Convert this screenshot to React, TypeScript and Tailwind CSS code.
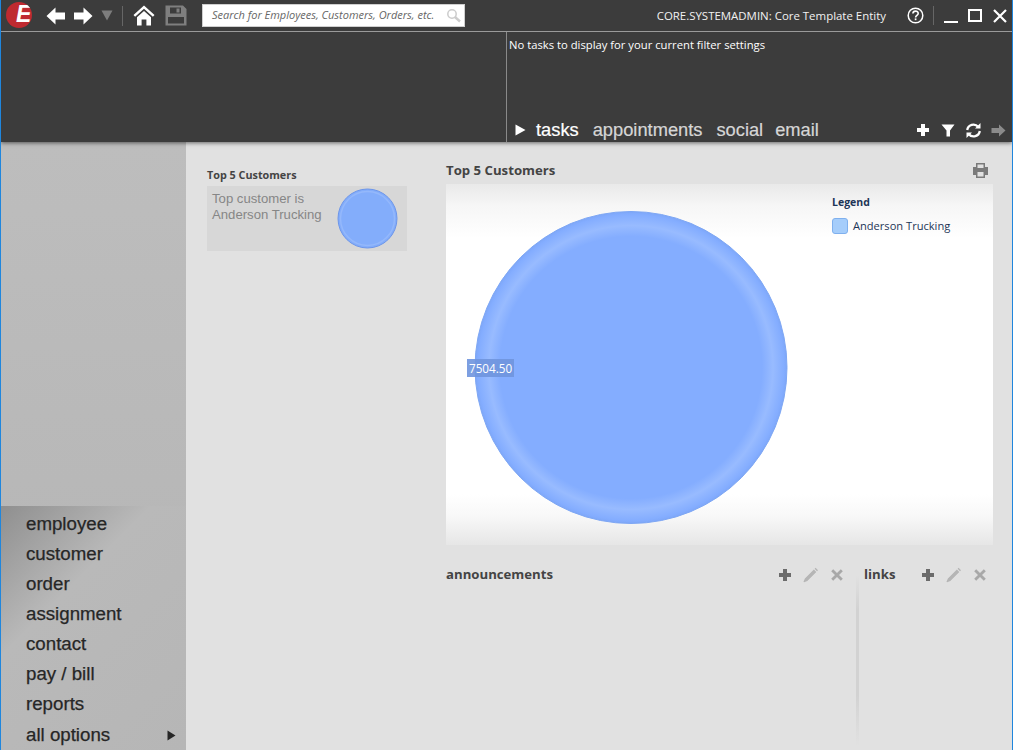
import React from 'react';

const MENU = ['employee', 'customer', 'order', 'assignment', 'contact', 'pay / bill', 'reports'];

function PlusIcon({ className }: { className?: string }) {
  return (
    <svg className={className} width="14" height="14" viewBox="0 0 14 14" fill="currentColor">
      <path d="M5 1h4v4h4v4H9v4H5V9H1V5h4z" />
    </svg>
  );
}

function PencilIcon() {
  return (
    <svg className="text-[#b5b5b5]" width="16" height="16" viewBox="0 0 16 16" fill="currentColor">
      <path d="M12.6 0.8l2.4 2.4-1 1-2.4-2.4zM10.9 2.5l2.4 2.4-9 9-3.2 1.4-.6-.6 1.4-3.2z" />
    </svg>
  );
}

function CloseIcon() {
  return (
    <svg className="text-[#a8a8a8]" width="14" height="14" viewBox="0 0 14 14" fill="currentColor">
      <path d="M3.2 1.2L7 5l3.8-3.8 2 2L9 7l3.8 3.8-2 2L7 9l-3.8 3.8-2-2L5 7 1.2 3.2z" />
    </svg>
  );
}

function PanelHeader({ title, width }: { title: string; width: string }) {
  return (
    <div className={`flex items-center ${width} h-[22px]`}>
      <span className="text-[13.2px] font-bold text-[#444]">{title}</span>
      <div className="ml-auto flex items-center gap-[11px] text-[#6b6b6b]">
        <PlusIcon />
        <PencilIcon />
        <CloseIcon />
      </div>
    </div>
  );
}

function TopBar() {
  return (
    <div className="h-[32px] flex items-center border-b border-[#9a9a9a] pl-[5px] text-white shrink-0">
      <div className="relative w-[26px] h-[26px] rounded-full bg-[#bf2a30] overflow-hidden -mt-px">
        <span className="absolute left-[10px] top-[-3px] text-[23px] leading-[30px] font-bold italic font-['Liberation_Sans',sans-serif] text-white">E</span>
      </div>
      <svg className="ml-[14px]" width="20" height="18" viewBox="0 0 20 18" fill="currentColor">
        <path d="M0.5 9L9.5 0.5V5.5H19V12.5H9.5V17.5z" />
      </svg>
      <svg className="ml-[7px]" width="20" height="18" viewBox="0 0 20 18" fill="currentColor">
        <path d="M19.5 9L10.5 0.5V5.5H1V12.5H10.5V17.5z" />
      </svg>
      <svg className="ml-[8px] text-[#7d7d7d]" width="12" height="11" viewBox="0 0 12 11" fill="currentColor">
        <path d="M0.5 0.5H11.5L6 10.5z" />
      </svg>
      <div className="ml-[9px] w-px h-[20px] bg-[#666]" />
      <svg className="ml-[10px]" width="22" height="21" viewBox="0 0 22 21" fill="currentColor">
        <path d="M11 0.5L21.5 10l-1.6 1.7L11 3.7l-8.9 8L.5 10z" />
        <path d="M11 6l7 6.2V20.5h-4.6v-6H8.6v6H4V12.2z" />
      </svg>
      <svg className="ml-[10px] text-[#7f7f7f]" width="22" height="21" viewBox="0 0 22 21" fill="currentColor">
        <path fillRule="evenodd" d="M0.5 0.5H18l3.5 3.5v16.5H.5zM5 2.5v6h11v-6zM11.5 3.5h3v4h-3zM3 12v6.5h16V12z" />
      </svg>
      <div className="ml-[15px] w-[263px] h-[23px] bg-white border border-[#cfcfcf] flex items-center pl-[9px] pr-[3px] -mt-px">
        <span className="text-[11px] italic text-[#666] whitespace-nowrap">Search for Employees, Customers, Orders, etc.</span>
        <svg className="ml-auto text-[#ccc]" width="15" height="15" viewBox="0 0 15 15" fill="none" stroke="currentColor">
          <circle cx="6" cy="6" r="4.2" strokeWidth="1.5" />
          <path d="M9 9l5 4.5" strokeWidth="2.4" />
        </svg>
      </div>
      <span className="ml-auto text-[11.45px] whitespace-nowrap text-[#f2f2f2]">CORE.SYSTEMADMIN: Core Template Entity</span>
      <svg className="ml-[21px]" width="17" height="17" viewBox="0 0 17 17" fill="none" stroke="currentColor">
        <circle cx="8.5" cy="8.5" r="7.3" strokeWidth="1.5" />
        <path d="M5.9 6.6c0-3.3 5.3-3.3 5.3-.2 0 1.9-2.6 1.9-2.6 4" strokeWidth="1.6" />
        <path d="M8.6 11.4v1.8" strokeWidth="1.7" />
      </svg>
      <div className="ml-[9px] w-px h-[19px] bg-[#666]" />
      <div className="ml-[10px] w-[14px] h-[2px] bg-white mt-[12px]" />
      <div className="ml-[10px] w-[14px] h-[13px] border-2 border-white" />
      <svg className="ml-[11px] mr-[5px]" width="14" height="14" viewBox="0 0 14 14" stroke="currentColor" strokeWidth="2.2">
        <path d="M1 1l12 12M13 1L1 13" />
      </svg>
    </div>
  );
}

function TaskPane() {
  return (
    <div className="flex-1 flex min-h-0">
      <div className="w-[505px] shrink-0" />
      <div className="flex-1 border-l border-[#8a8a8a] flex flex-col pl-[2px]">
        <div className="text-[11.25px] text-white pt-[5px] leading-[16px]">No tasks to display for your current filter settings</div>
        <div className="mt-auto flex items-center h-[24px] pl-[6px] pr-[6px] font-['Liberation_Sans',sans-serif] text-[18.3px] text-[#d6d6d6] [-webkit-text-stroke:0.2px]">
          <svg className="mr-[10px] text-white" width="11" height="12" viewBox="0 0 11 12" fill="currentColor">
            <path d="M0.5 0.5L10.5 6 0.5 11.5z" />
          </svg>
          <span className="text-white">tasks</span>
          <span className="ml-[14px]">appointments</span>
          <span className="ml-[14px]">social</span>
          <span className="ml-[12px]">email</span>
          <div className="ml-auto flex items-center gap-[10px] text-white">
            <PlusIcon className="mr-px" />
            <svg width="14" height="13" viewBox="0 0 14 13" fill="currentColor">
              <path d="M0.5 0.5h13L9 6.5v6H5.5v-6z" />
            </svg>
            <svg width="17" height="17" viewBox="0 0 17 17" fill="none" stroke="currentColor" strokeWidth="2.3">
              <path d="M2.2 8a6.3 6.3 0 0 1 11-3.2M14.8 9a6.3 6.3 0 0 1-11 3.2" />
              <path d="M15.5 1v5.5H10z" fill="currentColor" stroke="none" />
              <path d="M1.5 16v-5.5H7z" fill="currentColor" stroke="none" />
            </svg>
            <svg className="text-[#8b8b8b] -ml-px" width="15" height="13" viewBox="0 0 15 13" fill="currentColor">
              <path d="M14.5 6.5L8 .5v3.5H.5v5H8v3.5z" />
            </svg>
          </div>
        </div>
      </div>
    </div>
  );
}

function Sidebar() {
  return (
    <div className="w-[185px] shrink-0 flex flex-col justify-end bg-gradient-to-b from-[#bdbdbd] to-[#b4b4b4]">
      <div className="h-[244px] pl-[25px] pr-[10px] bg-[linear-gradient(135deg,#8f8f8f_0%,#b9b9b9_35%,#b6b6b6_100%)] font-['Liberation_Sans',sans-serif] text-[18.7px] text-[#262626] [-webkit-text-stroke:0.25px]">
        {MENU.map((item) => (
          <div key={item} className="h-[30px] leading-[36px]">{item}</div>
        ))}
        <div className="h-[34px] flex items-center justify-between pt-[4px]">
          <span>all options</span>
          <svg className="text-[#262626]" width="9" height="11" viewBox="0 0 9 11" fill="currentColor">
            <path d="M0.5 0.5L8.5 5.5 0.5 10.5z" />
          </svg>
        </div>
      </div>
    </div>
  );
}

function MiniCard() {
  return (
    <div className="w-[260px] shrink-0 pl-[21px] pt-[22px]">
      <div className="text-[10.8px] font-bold text-[#444] leading-[21px] mb-px">Top 5 Customers</div>
      <div className="w-[200px] h-[65px] bg-[#d7d7d7] flex pl-[5px] pt-[5px]">
        <div className="font-['Liberation_Sans',sans-serif] text-[13.15px] leading-[16px] text-[#868686] w-[120px]">
          Top customer is Anderson Trucking
        </div>
        <svg className="mt-[-3px] ml-[5px]" width="61" height="61" viewBox="0 0 61 61">
          <circle cx="30.5" cy="30.5" r="29.5" fill="#83adfb" stroke="#6d96ea" />
          <circle cx="30.5" cy="30.5" r="27" fill="none" stroke="#94b8fb" strokeWidth="1.5" />
        </svg>
      </div>
    </div>
  );
}

function ChartPanel() {
  return (
    <div className="relative h-[361px] bg-[linear-gradient(180deg,#e9e9e9_0%,#f6f6f6_6%,#ffffff_15%,#ffffff_86%,#f8f8f8_92%,#e6e6e6_100%)] flex">
      <svg className="ml-[28px] mt-[26px] shrink-0" width="315" height="315" viewBox="0 0 315 315">
        <defs>
          <radialGradient id="pie">
            <stop offset="0%" stopColor="#84adff" />
            <stop offset="84%" stopColor="#84adff" />
            <stop offset="91%" stopColor="#98bbff" />
            <stop offset="98%" stopColor="#84adff" />
            <stop offset="100%" stopColor="#7ea7f8" />
          </radialGradient>
        </defs>
        <circle cx="157" cy="157.5" r="156" fill="url(#pie)" stroke="#7ea7f4" strokeWidth="1" />
      </svg>
      <div className="ml-[43px] pt-[10px]">
        <div className="text-[10.5px] font-bold text-[#1d3557] leading-[16px]">Legend</div>
        <div className="flex items-center gap-[5px] mt-[8px]">
          <div className="w-[16px] h-[16px] rounded-[3px] border border-[#7fb0ee] bg-[#a5cdfb]" />
          <span className="text-[11.1px] text-[#1d3557] whitespace-nowrap">Anderson Trucking</span>
        </div>
      </div>
      <div className="absolute left-[21px] top-[175px] h-[18px] px-[2px] bg-[#6f95de]/90 text-white text-[11.7px] leading-[18px]">7504.50</div>
    </div>
  );
}

function BottomPanels() {
  return (
    <div className="flex flex-1 min-h-0">
      <div className="w-[410px] pt-[19px] pr-[10px]">
        <PanelHeader title="announcements" width="w-[398px]" />
      </div>
      <div className="w-[3px] mt-[30px] mb-[4px] bg-[linear-gradient(180deg,#e1e1e1,#d2d2d2_20%,#d2d2d2_70%,#e1e1e1)]" />
      <div className="flex-1 pt-[19px] pl-[5px] pr-[6px]">
        <PanelHeader title="links" width="w-full" />
      </div>
    </div>
  );
}

export default function App() {
  return (
    <div className="w-[1013px] h-[750px] overflow-hidden flex flex-col border-x border-[#1f86dd] bg-[#e1e1e1] font-['Open_Sans',sans-serif]">
      <div className="h-[142px] shrink-0 bg-[#3c3c3c] flex flex-col shadow-[0_1px_4px_rgba(0,0,0,0.55)] relative z-10">
        <TopBar />
        <TaskPane />
      </div>
      <div className="flex-1 flex min-h-0">
        <Sidebar />
        <div className="flex flex-1 min-w-0">
          <MiniCard />
          <div className="w-[547px] shrink-0 pt-[16px] flex flex-col">
            <div className="flex items-center justify-between h-[25px] mb-px pr-[4px]">
              <span className="text-[13.2px] font-bold text-[#444]">Top 5 Customers</span>
              <svg width="17" height="17" viewBox="0 0 17 17">
                <path d="M4 1h9v4h3v8h-3v3H4v-3H1V5h3z" fill="#7a7a7a" />
                <path d="M5.5 2.5h6V6h-6zM5.5 10h6v4.5h-6z" fill="#e1e1e1" />
              </svg>
            </div>
            <ChartPanel />
            <BottomPanels />
          </div>
        </div>
      </div>
    </div>
  );
}
